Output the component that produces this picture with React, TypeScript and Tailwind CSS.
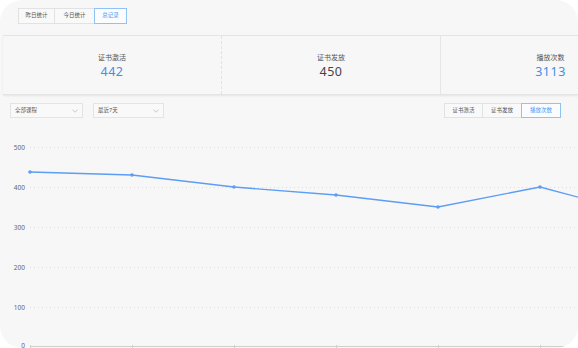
import React from "react";

const font = { fontFamily: '"Noto Sans", "Noto Sans CJK SC", sans-serif' };

function Chevron() {
  return (
    <svg width="6" height="4" viewBox="0 0 6 4" className="block">
      <path d="M0.5 0.8 L3 3.2 L5.5 0.8" fill="none" stroke="#bbb" strokeWidth="0.8" />
    </svg>
  );
}

const OFF = 118;
const pts: [number, number][] = [
  [30, 172],
  [132, 175],
  [234, 187],
  [336, 195],
  [438, 207],
  [540, 187],
  [642, 214],
];

function Chart() {
  const grid = [
    { v: "500", y: 147 },
    { v: "400", y: 187 },
    { v: "300", y: 227 },
    { v: "200", y: 267 },
    { v: "100", y: 307 },
  ];
  return (
    <svg width="578" height="230" className="block">
      {grid.map((g) => (
        <g key={g.v}>
          <line x1="30" x2="578" y1={g.y - OFF + 0.5} y2={g.y - OFF + 0.5} stroke="#dcdcdc" strokeWidth="1" strokeDasharray="1 3" />
          <text x="25" y={g.y - OFF + 2.5} textAnchor="end" fontSize="6.5" fill="#666" style={font}>
            {g.v}
          </text>
        </g>
      ))}
      <text x="25" y={347.5 - OFF} textAnchor="end" fontSize="6.5" fill="#666" style={font}>
        0
      </text>
      <line x1="30" x2="578" y1={346.5 - OFF} y2={346.5 - OFF} stroke="#cfcfcf" strokeWidth="1" />
      {[30, 132, 234, 336, 438, 540].map((x) => (
        <line key={x} x1={x + 0.5} x2={x + 0.5} y1={345 - OFF} y2={350 - OFF} stroke="#cfcfcf" strokeWidth="1" />
      ))}
      <polyline
        points={pts.map(([x, y]) => `${x},${y - OFF}`).join(" ")}
        fill="none"
        stroke="#5c9df5"
        strokeWidth="1.3"
      />
      {pts.map(([x, y]) => (
        <circle key={x} cx={x} cy={y - OFF} r="1.8" fill="#5c9df5" />
      ))}
    </svg>
  );
}

export default function App() {
  const tabs = ["昨日统计", "今日统计", "总记录"];
  const stats = [
    { label: "证书激活", value: "442", color: "text-[#3f8fe8]" },
    { label: "证书发放", value: "450", color: "text-[#444]" },
    { label: "播放次数", value: "3113", color: "text-[#3f8fe8]" },
  ];
  const rbtns = ["证书激活", "证书发放", "播放次数"];
  return (
    <div className="w-[578px] h-[348px] bg-white overflow-hidden" style={font}>
      <div className="w-[578px] h-[348px] rounded-[22px] bg-[#f7f7f7] overflow-hidden flex flex-col">
        <div className="h-[35px] pt-[8px] pl-[18px] flex items-start">
          {tabs.map((t, i) => (
            <div
              key={t}
              className={
                "h-[16px] flex items-center justify-center text-[5.5px] leading-none border " +
                (i === 2
                  ? "w-[33px] border-[#90c2f4] text-[#4a9af0] bg-[#fafcff]"
                  : i === 0
                  ? "w-[37px] border-[#e2e2e2] text-[#555] bg-[#f9f9f9]"
                  : "w-[39px] border-[#e2e2e2] border-l-0 border-r-0 text-[#555] bg-[#f9f9f9]")
              }
            >
              {t}
            </div>
          ))}
        </div>
        <div className="ml-[3px] h-[60px] border-t border-b border-[#e4e4e4] flex shadow-[0_1px_2px_rgba(0,0,0,0.08)] shrink-0">
          {stats.map((s, i) => (
            <div
              key={s.label}
              className={
                "w-[219px] shrink-0 flex flex-col items-center pt-[17px] " +
                (i === 0 ? "border-r border-dashed border-[#e2e2e2]" : i === 1 ? "border-r border-[#e6e6e6]" : "")
              }
            >
              <div className="text-[7px] leading-[9px] text-[#555]">{s.label}</div>
              <div className={"text-[12.5px] leading-[15px] mt-[2px] tracking-[0.5px] " + s.color}>{s.value}</div>
            </div>
          ))}
        </div>
        <div className="mt-[8px] h-[15px] flex items-stretch shrink-0">
          <div className="ml-[10px] w-[73px] border border-[#e4e4e4] bg-[#f9f9f9] flex items-center justify-between pl-[4px] pr-[4px]">
            <span className="text-[5.5px] leading-none text-[#555]">全部课程</span>
            <Chevron />
          </div>
          <div className="ml-[10px] w-[71px] border border-[#e4e4e4] bg-[#f9f9f9] flex items-center justify-between pl-[4px] pr-[4px]">
            <span className="text-[5.5px] leading-none text-[#555]">最近7天</span>
            <Chevron />
          </div>
          <div className="ml-auto mr-[17px] flex">
            {rbtns.map((b, i) => (
              <div
                key={b}
                className={
                  "h-[15px] flex items-center justify-center text-[5.5px] leading-none border " +
                  (i === 2
                    ? "w-[40px] border-[#90c2f4] text-[#4a9af0] bg-[#fafcff]"
                    : i === 0
                    ? "w-[39px] border-[#e2e2e2] text-[#555] bg-[#f9f9f9]"
                    : "w-[38px] border-[#e2e2e2] border-l-0 border-r-0 text-[#555] bg-[#f9f9f9]")
                }
              >
                {b}
              </div>
            ))}
          </div>
        </div>
        <Chart />
      </div>
    </div>
  );
}
